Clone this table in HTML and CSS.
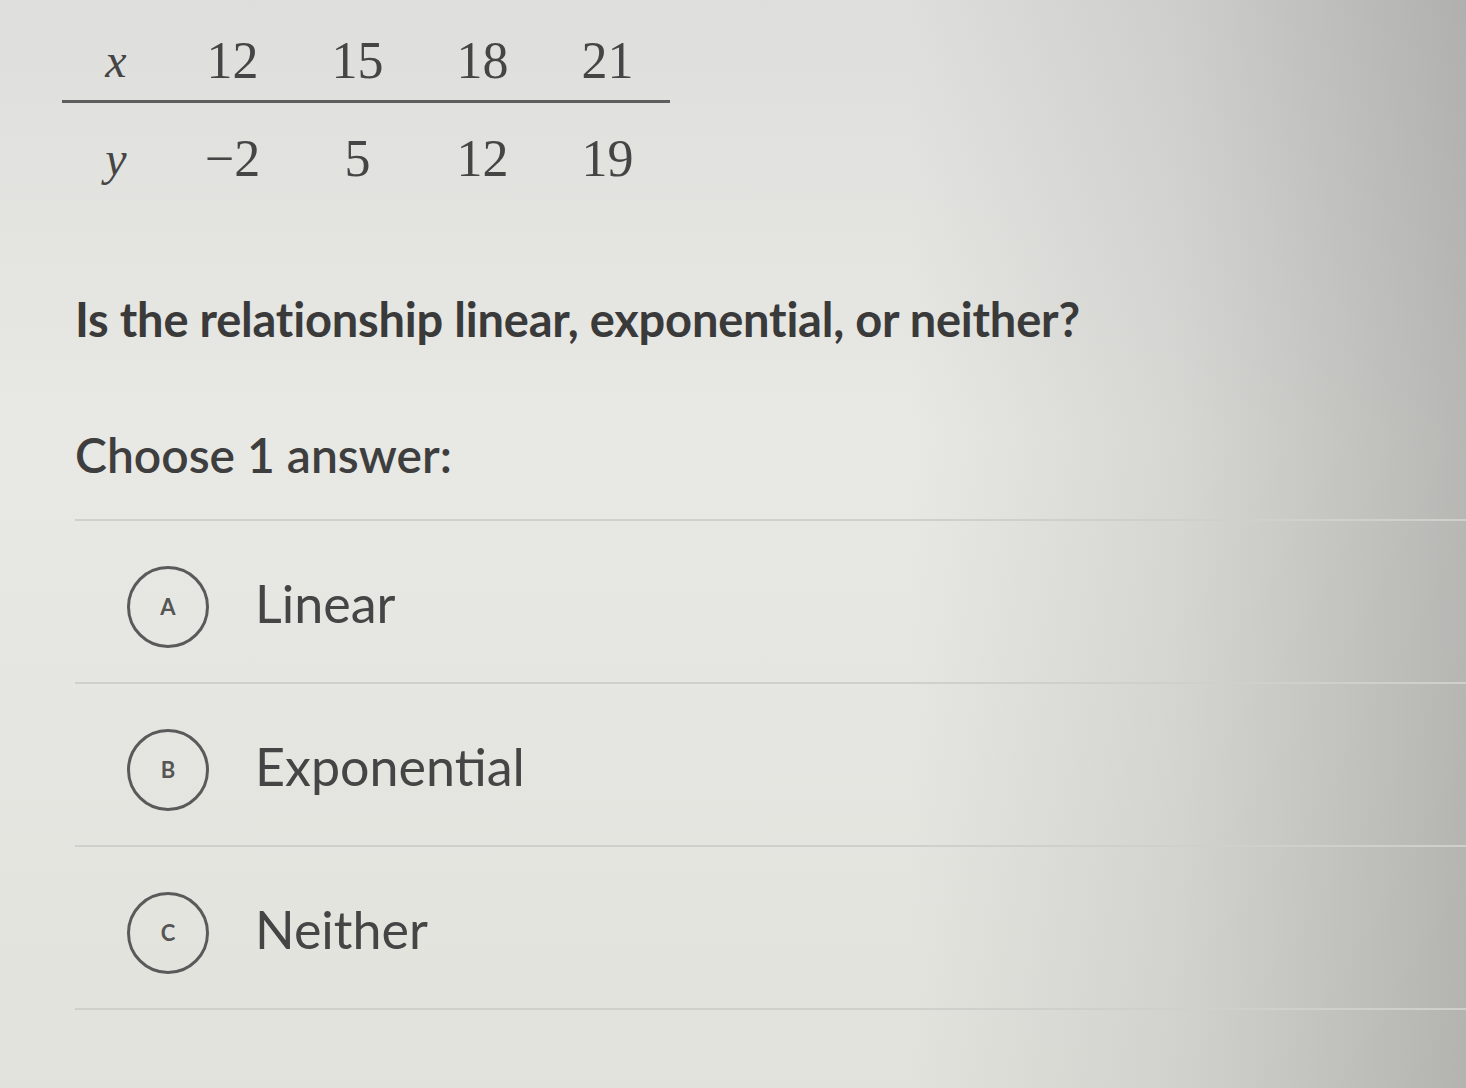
FILE: index.html
```html
<!DOCTYPE html>
<html lang="en">
<head>
<meta charset="utf-8">
<title>Linear, exponential, or neither?</title>
<link rel="stylesheet" href="styles.css">
</head>
<body>
<main class="page">
  <table class="data">
    <tr class="row-x">
      <td class="var">x</td><td>12</td><td>15</td><td>18</td><td>21</td>
    </tr>
    <tr class="row-y">
      <td class="var">y</td><td>&minus;2</td><td>5</td><td>12</td><td>19</td>
    </tr>
  </table>

  <p class="question">Is the relationship linear, exponential, or neither?</p>

  <p class="prompt">Choose 1 answer:</p>

  <ul class="choices">
    <li class="choice"><span class="badge">A</span><span class="label">Linear</span></li>
    <li class="choice"><span class="badge">B</span><span class="label">Exponential</span></li>
    <li class="choice"><span class="badge">C</span><span class="label">Neither</span></li>
  </ul>
</main>
</body>
</html>
```

FILE: styles.css
```css
html, body {
  margin: 0;
  padding: 0;
  height: 100%;
}

body {
  background:
    linear-gradient(90deg, rgba(0,0,0,0) 0%, rgba(0,0,0,0) 62%, rgba(90,90,90,0.12) 80%, rgba(70,70,70,0.3) 100%),
    linear-gradient(180deg, #dededc 0%, #e8e8e4 40%, #e2e2dd 100%);
  color: #3c3c3c;
  font-family: "Lato", "Liberation Sans", sans-serif;
  overflow: hidden;
}

.page {
  padding: 20px 0 0 62px;
}

.data {
  border-collapse: collapse;
  font-family: "Liberation Serif", "DejaVu Serif", serif;
  font-size: 52px;
  color: #454545;
}

.data td {
  width: 125px;
  text-align: center;
  padding: 0;
}

.data td.var {
  width: 108px;
  font-style: italic;
  font-size: 48px;
}

.row-x td {
  height: 80px;
  border-bottom: 3px solid #5e5e5e;
}

.row-y td {
  height: 110px;
}

.question {
  margin: 78px 0 0 13px;
  font-size: 47px;
  font-weight: 700;
  color: #3a3a3a;
  letter-spacing: -0.2px;
}

.prompt {
  margin: 79px 0 0 13px;
  font-size: 48px;
  font-weight: 600;
  color: #3e3e3e;
}

.choices {
  list-style: none;
  margin: 36px 0 0 13px;
  padding: 0;
  border-top: 2px solid #cfcfcc;
}

.choice {
  display: flex;
  align-items: center;
  gap: 46px;
  height: 163px;
  padding: 10px 0 0 52px;
  border-bottom: 2px solid #cfcfcc;
  box-sizing: border-box;
}

.badge {
  flex: none;
  width: 82px;
  height: 82px;
  border: 3px solid #5a5a5a;
  border-radius: 50%;
  box-sizing: border-box;
  display: flex;
  align-items: center;
  justify-content: center;
  font-size: 22px;
  font-weight: 700;
  color: #555;
}

.label {
  font-size: 52px;
  color: #454545;
  margin-top: -8px;
}
```
